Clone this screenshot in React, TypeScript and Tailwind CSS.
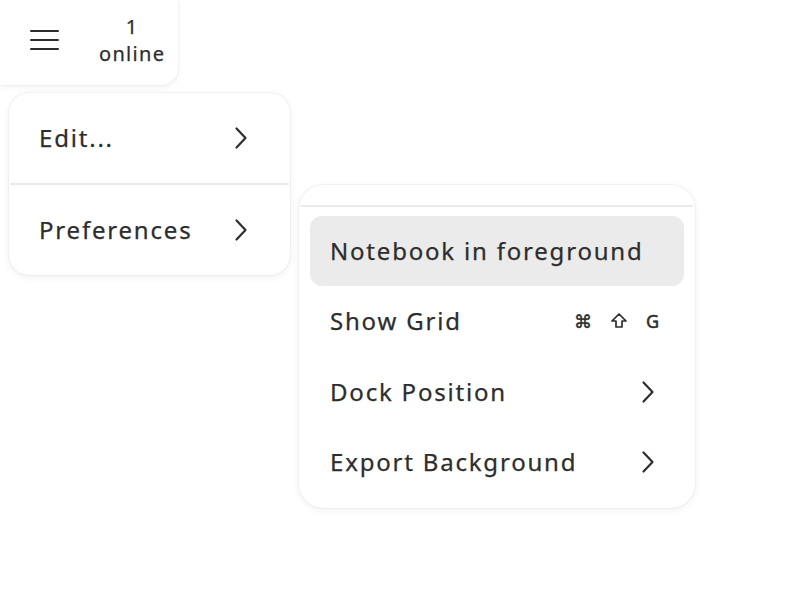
import React from "react";

const font = { fontFamily: '"Noto Sans", "Open Sans", sans-serif' };

function Chevron() {
  return (
    <svg width="14" height="24" viewBox="0 0 14 24" fill="none" className="shrink-0">
      <polyline points="2.5,2.5 11.5,12 2.5,21.5" stroke="#2d2d2d" strokeWidth="2.2" strokeLinecap="round" strokeLinejoin="round" />
    </svg>
  );
}

export default function App() {
  return (
    <div className="relative w-[788px] h-[598px] bg-white overflow-hidden text-[#2d2d2d] [-webkit-text-stroke:0.25px_#2d2d2d]" style={font}>
      {/* top-left panel */}
      <div className="flex items-center pb-[5px] w-[178px] h-[85px] bg-white rounded-br-[16px] shadow-[0_0_2px_rgba(0,0,0,0.10),0_2px_6px_rgba(0,0,0,0.06)]">
        <div className="ml-[30px] w-[29px] flex flex-col gap-[7px]">
          <div className="h-[2px] bg-[#2d2d2d] rounded" />
          <div className="h-[2px] bg-[#2d2d2d] rounded" />
          <div className="h-[2px] bg-[#2d2d2d] rounded" />
        </div>
        <div className="ml-[40px] flex flex-col items-center text-[20px] leading-[27px] tracking-[1.3px]">
          <span>1</span>
          <span>online</span>
        </div>
      </div>

      {/* main menu */}
      <div className="absolute left-[9px] top-[93px] w-[281px] bg-white rounded-[20px] shadow-[0_0_2px_rgba(0,0,0,0.12),0_2px_8px_rgba(0,0,0,0.06)] flex flex-col">
        <div className="h-[90px] flex items-center justify-between pl-[30px] pr-[42px] text-[24px] tracking-[1.8px]">
          <span>Edit...</span>
          <Chevron />
        </div>
        <div className="h-[2px] mx-[1px] bg-[#ebebeb]" />
        <div className="h-[90px] flex items-center justify-between pl-[30px] pr-[42px] text-[24px] tracking-[1.8px]">
          <span>Preferences</span>
          <Chevron />
        </div>
      </div>

      {/* submenu */}
      <div className="absolute left-[299px] top-[185px] w-[396px] h-[323px] bg-white rounded-[24px] shadow-[0_0_2px_rgba(0,0,0,0.12),0_2px_8px_rgba(0,0,0,0.06)] flex flex-col">
        <div className="h-[20px]" />
        <div className="h-[2px] mx-[2px] bg-[#ebebeb]" />
        <div className="flex flex-col px-[11px] pt-[9px]">
          <div className="h-[70px] flex items-center rounded-[12px] bg-[#ebebeb] pl-[20px] pr-[31px] text-[24px] tracking-[1.8px]">
            <span>Notebook in foreground</span>
          </div>
          <div className="h-[70px] flex items-center justify-between pl-[20px] pr-[25px] text-[24px] tracking-[1.8px]">
            <span>Show Grid</span>
            <span className="flex items-center gap-[18px] text-[18px] tracking-normal [-webkit-text-stroke:0.5px_#2d2d2d]">
              <span>⌘</span>
              <svg width="18" height="18" viewBox="0 0 18 18" fill="none">
                <path d="M9 2 L16 9 H12 V15 H6 V9 H2 Z" stroke="#2d2d2d" strokeWidth="1.7" strokeLinejoin="round" />
              </svg>
              <span>G</span>
            </span>
          </div>
          <div className="h-[71px] flex items-center justify-between pl-[20px] pr-[29px] text-[24px] tracking-[1.8px]">
            <span>Dock Position</span>
            <Chevron />
          </div>
          <div className="h-[70px] flex items-center justify-between pl-[20px] pr-[29px] text-[24px] tracking-[1.8px]">
            <span>Export Background</span>
            <Chevron />
          </div>
        </div>
      </div>
    </div>
  );
}
